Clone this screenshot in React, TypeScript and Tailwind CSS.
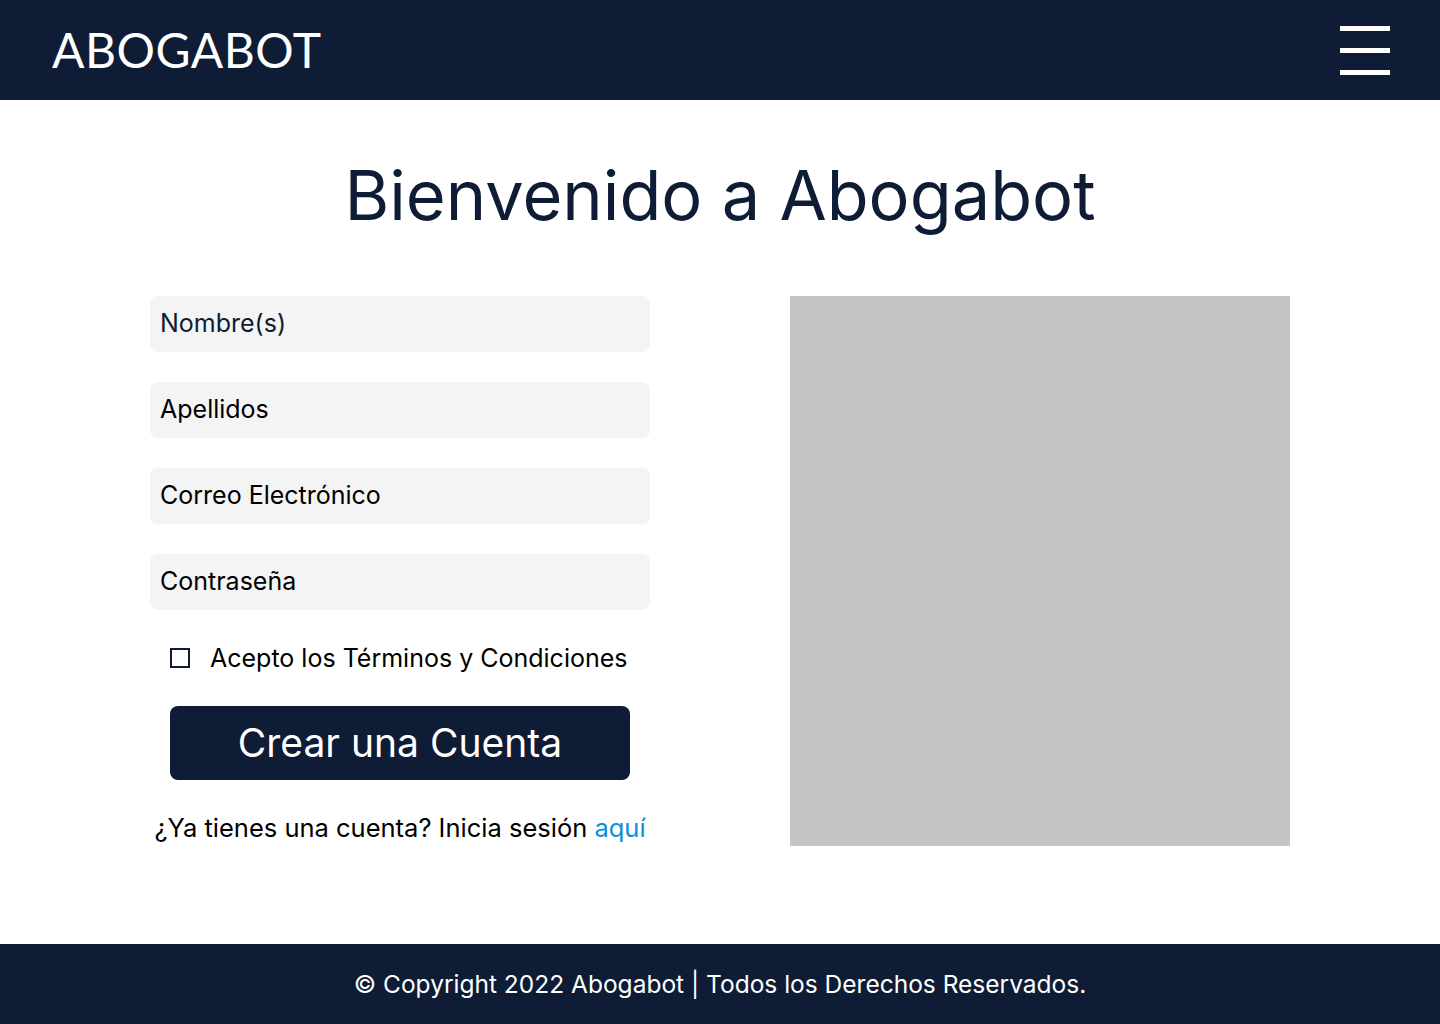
const Field = ({ label, dark }: { label: string; dark?: boolean }) => {
  return (
    <div
      className={`flex h-[56px] w-full items-center rounded-[8px] bg-[#f4f4f4] px-[10px] text-[25px] ${
        dark ? "text-[#0e1c36]" : "text-black"
      }`}
    >
      {label}
    </div>
  );
};

const App = () => {
  return (
    <div className="flex min-h-[1024px] w-full flex-col bg-white font-['Inter',sans-serif]">
      <header className="flex h-[100px] items-center justify-between bg-[#0e1c36] pl-[52px] pr-[50px]">
        <span className="font-['Lato',sans-serif] text-[48px] font-normal tracking-[0.5px] text-white">
          ABOGABOT
        </span>
        <div className="flex w-[50px] flex-col gap-[17px]">
          <span className="h-[5px] w-full bg-white" />
          <span className="h-[5px] w-full bg-white" />
          <span className="h-[5px] w-full bg-white" />
        </div>
      </header>

      <main className="flex flex-1 flex-col items-center">
        <h1 className="mt-[62px] text-[68.5px] font-normal leading-none text-[#0e1c36]">
          Bienvenido a Abogabot
        </h1>

        <div className="mt-[65px] flex w-[1140px] gap-[140px]">
          <div className="flex w-[500px] flex-col">
            <div className="flex flex-col gap-[30px]">
              <Field label="Nombre(s)" dark />
              <Field label="Apellidos" />
              <Field label="Correo Electrónico" />
              <Field label="Contraseña" />
            </div>

            <label className="mt-[30px] flex items-center gap-[20px] pl-[20px] text-[25px] text-black">
              <span className="h-[20px] w-[20px] border-2 border-[#0e1c36]" />
              Acepto los Términos y Condiciones
            </label>

            <button className="mx-[20px] mt-[29px] h-[74px] rounded-[8px] bg-[#0e1c36] text-[39px] text-white">
              Crear una Cuenta
            </button>

            <p className="mt-[29px] text-center text-[25.5px] text-black">
              ¿Ya tienes una cuenta? Inicia sesión{" "}
              <a href="#" className="text-[#0a8fd8]">
                aquí
              </a>
            </p>
          </div>

          <div className="h-[550px] w-[500px] bg-[#c4c4c4]" />
        </div>
      </main>

      <footer className="flex h-[80px] items-center justify-center bg-[#0e1c36] text-[24.5px] text-white">
        © Copyright 2022 Abogabot | Todos los Derechos Reservados.
      </footer>
    </div>
  );
};

export default App;
